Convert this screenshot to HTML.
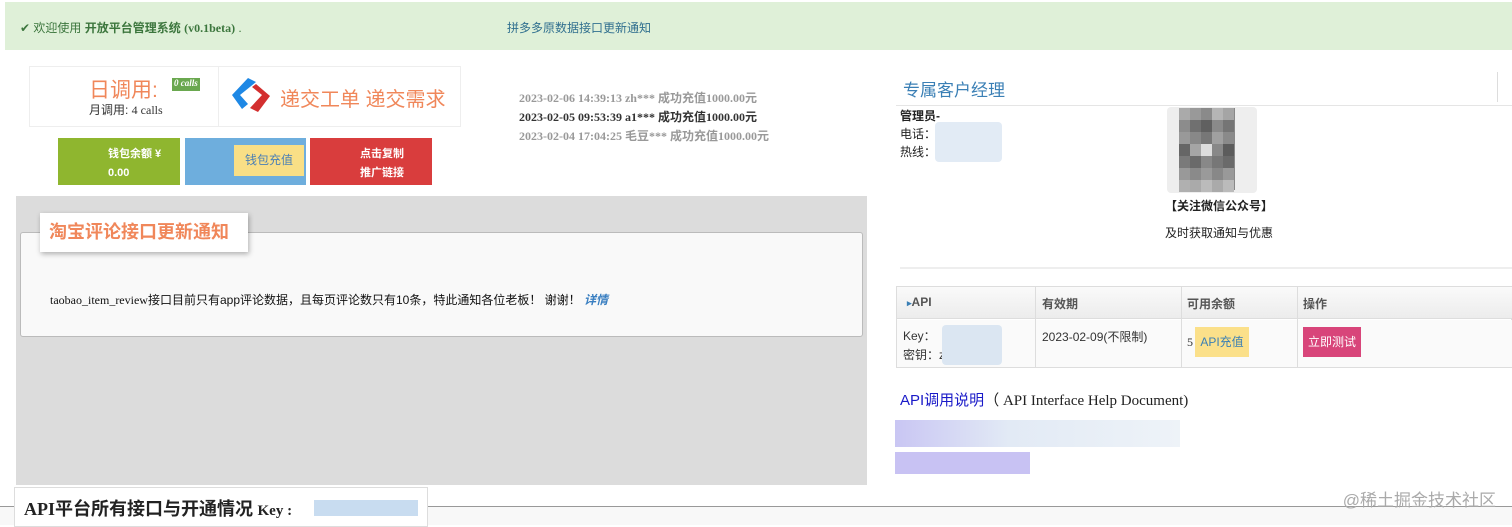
<!DOCTYPE html>
<html><head><meta charset="utf-8"><style>
*{margin:0;padding:0;box-sizing:border-box}
body{width:1512px;height:525px;overflow:hidden;background:#fff;font-family:"Liberation Serif","Noto Sans CJK SC",serif;font-size:12px;color:#333;position:relative}
.a{position:absolute}
.cjk{font-family:"Liberation Sans","Noto Sans CJK SC",sans-serif}
.q{position:absolute;width:11px;height:12px}
</style></head><body>
<div class="a" style="left:5px;top:2px;width:1507px;height:48px;background:#dff0d8"></div>
<div class="a cjk" style="left:20px;top:19px;font-size:12px;color:#3c763d">✔ 欢迎使用 <b>开放平台管理系统</b> <span style="font-family:'Liberation Serif';font-weight:bold">(v0.1beta)</span> .</div>
<div class="a cjk" style="left:507px;top:19px;color:#31708f">拼多多原数据接口更新通知</div>

<div class="a" style="left:29px;top:66px;width:432px;height:61px;border:1px solid #eee"></div>
<div class="a" style="left:218px;top:66px;width:1px;height:61px;background:#eee"></div>
<div class="a cjk" style="left:89px;top:74px;font-size:21px;color:#f0875a">日调用:</div>
<div class="a" style="left:172px;top:78px;width:28px;height:13px;background:#6aa84f;color:#fff;font-size:9px;font-style:italic;font-weight:bold;overflow:hidden;padding-left:2px">0 calls</div>
<div class="a cjk" style="left:89px;top:101px;font-size:12px;color:#333">月调用: <span style="font-family:'Liberation Serif'">4 calls</span></div>
<svg class="a" style="left:230px;top:78px" width="42" height="34" viewBox="0 0 42 34"><path d="M18 0 L26 4 L10 17 L18 26 L12 31 L2 17Z" fill="#1e88e5"/><path d="M26 6 L40 18 L28 34 L20 30 L32 17 L22 9Z" fill="#d32f2f"/></svg>
<div class="a cjk" style="left:280px;top:83px;font-size:20px;color:#f0875a">递交工单 递交需求</div>

<div class="a" style="left:58px;top:138px;width:122px;height:47px;background:#8fb62f"></div>
<div class="a cjk" style="left:108px;top:145px;color:#fff;font-weight:bold;font-size:11px;line-height:19px">钱包余额 ¥<br>0.00</div>
<div class="a" style="left:185px;top:138px;width:121px;height:47px;background:#6eaedd"></div>
<div class="a cjk" style="left:234px;top:145px;width:70px;height:31px;background:#f9df86;color:#4a7fb5;font-size:12px;text-align:center;line-height:31px">钱包充值</div>
<div class="a" style="left:310px;top:138px;width:122px;height:47px;background:#d93d3d"></div>
<div class="a cjk" style="left:360px;top:145px;color:#fff;font-weight:bold;font-size:11px;line-height:19px">点击复制<br>推广链接</div>

<div class="a" style="left:519px;top:89px;color:#999;font-size:12px;line-height:19px;font-weight:bold">2023-02-06 14:39:13 zh*** 成功充值1000.00元<br><span style="color:#333">2023-02-05 09:53:39 a1*** 成功充值1000.00元</span><br>2023-02-04 17:04:25 毛豆*** 成功充值1000.00元</div>

<div class="a" style="left:16px;top:196px;width:851px;height:289px;background:#dcdcdc"></div>
<div class="a" style="left:20px;top:232px;width:843px;height:105px;background:#f9f9f9;border:1px solid #bbb;border-radius:3px"></div>
<div class="a cjk" style="left:40px;top:213px;width:208px;height:39px;background:#fff;box-shadow:1px 2px 5px rgba(0,0,0,.3);color:#f0875a;font-size:18px;font-weight:bold;padding:5px 0 0 9px">淘宝评论接口更新通知</div>
<div class="a" style="left:50px;top:291px;font-size:12px;color:#111">taobao_item_review<span class="cjk">接口目前只有app评论数据，且每页评论数只有10条，特此通知各位老板！ 谢谢！ </span><i class="cjk" style="color:#3a7fc1;font-weight:bold">详情</i></div>

<div class="a" style="left:0;top:506px;width:1512px;height:1px;background:#999"></div>
<div class="a" style="left:0;top:507px;width:1512px;height:18px;background:#f8f8f8"></div>
<div class="a" style="left:14px;top:487px;width:414px;height:40px;background:#fff;border:1px solid #ddd"></div>
<div class="a" style="left:24px;top:495px;font-size:18px;font-weight:bold;color:#222">API<span class="cjk">平台所有接口与开通情况</span> <span style="font-size:15px">Key :</span></div>
<div class="a" style="left:314px;top:500px;width:104px;height:16px;background:#c8dcf0"></div>

<div class="a cjk" style="left:903px;top:76px;font-size:17px;color:#3a7fb5">专属客户经理</div>
<div class="a" style="left:1497px;top:72px;width:1px;height:30px;background:#ddd"></div>
<div class="a" style="left:896px;top:105px;width:616px;height:1px;background:#e5e5e5"></div>
<div class="a cjk" style="left:900px;top:107px;font-size:12px;line-height:18px;color:#222"><b>管理员-</b><br>电话：<br>热线：</div>
<div class="a" style="left:935px;top:122px;width:67px;height:40px;background:#e2ebf5;border-radius:4px"></div>
<div class="a" style="left:1167px;top:107px;width:90px;height:86px;background:#eee;border-radius:4px"></div>
<div class="a" style="left:1179px;top:108px;width:56px;height:82px;background:#888">
<div class="q" style="left:0;top:0;background:#aaa"></div><div class="q" style="left:11px;top:0;background:#999"></div><div class="q" style="left:22px;top:0;background:#8a8a8a"></div><div class="q" style="left:33px;top:0;background:#b5b5b5"></div><div class="q" style="left:44px;top:0;background:#a5a5a5"></div>
<div class="q" style="left:0;top:12px;background:#8c8c8c"></div><div class="q" style="left:11px;top:12px;background:#707070"></div><div class="q" style="left:22px;top:12px;background:#606060"></div><div class="q" style="left:33px;top:12px;background:#8a8a8a"></div><div class="q" style="left:44px;top:12px;background:#757575"></div>
<div class="q" style="left:0;top:24px;background:#999"></div><div class="q" style="left:11px;top:24px;background:#888"></div><div class="q" style="left:22px;top:24px;background:#777"></div><div class="q" style="left:33px;top:24px;background:#a0a0a0"></div><div class="q" style="left:44px;top:24px;background:#8a8a8a"></div>
<div class="q" style="left:0;top:36px;background:#666"></div><div class="q" style="left:11px;top:36px;background:#a5a5a5"></div><div class="q" style="left:22px;top:36px;background:#ddd"></div><div class="q" style="left:33px;top:36px;background:#888"></div><div class="q" style="left:44px;top:36px;background:#5c5c5c"></div>
<div class="q" style="left:0;top:48px;background:#7a7a7a"></div><div class="q" style="left:11px;top:48px;background:#6a6a6a"></div><div class="q" style="left:22px;top:48px;background:#888"></div><div class="q" style="left:33px;top:48px;background:#777"></div><div class="q" style="left:44px;top:48px;background:#6a6a6a"></div>
<div class="q" style="left:0;top:60px;background:#999"></div><div class="q" style="left:11px;top:60px;background:#8a8a8a"></div><div class="q" style="left:22px;top:60px;background:#9a9a9a"></div><div class="q" style="left:33px;top:60px;background:#888"></div><div class="q" style="left:44px;top:60px;background:#999"></div>
<div class="q" style="left:0;top:72px;background:#b0b0b0"></div><div class="q" style="left:11px;top:72px;background:#aaa"></div><div class="q" style="left:22px;top:72px;background:#bbb"></div><div class="q" style="left:33px;top:72px;background:#aaa"></div><div class="q" style="left:44px;top:72px;background:#bbb"></div>
</div>
<div class="a cjk" style="left:1165px;top:197px;font-size:12px;font-weight:bold;color:#222">【关注微信公众号】</div>
<div class="a cjk" style="left:1165px;top:224px;font-size:12px;color:#222">及时获取通知与优惠</div>
<div class="a" style="left:900px;top:267px;width:612px;height:2px;background:#eee"></div>

<div class="a" style="left:896px;top:286px;width:616px;height:82px;border:1px solid #ddd"></div>
<div class="a" style="left:897px;top:287px;width:615px;height:32px;background:linear-gradient(#fafafa,#ececec);border-bottom:1px solid #ddd"></div>
<div class="a" style="left:897px;top:320px;width:615px;height:47px;background:#fafafa"></div>
<div class="a" style="left:1035px;top:287px;width:1px;height:81px;background:#ddd"></div>
<div class="a" style="left:1181px;top:287px;width:1px;height:81px;background:#ddd"></div>
<div class="a" style="left:1297px;top:287px;width:1px;height:81px;background:#ddd"></div>
<div class="a cjk" style="left:907px;top:295px;font-weight:bold;color:#555"><span style="color:#3a7fb5;font-size:9px">▸</span>API</div>
<div class="a cjk" style="left:1042px;top:295px;font-weight:bold;color:#555">有效期</div>
<div class="a cjk" style="left:1187px;top:295px;font-weight:bold;color:#555">可用余额</div>
<div class="a cjk" style="left:1303px;top:295px;font-weight:bold;color:#555">操作</div>
<div class="a cjk" style="left:903px;top:327px;line-height:19px;color:#333">Key：<br>密钥：z</div>
<div class="a" style="left:942px;top:325px;width:60px;height:40px;background:#dbe6f2;border-radius:4px"></div>
<div class="a cjk" style="left:1042px;top:328px;color:#333">2023-02-09(不限制)</div>
<div class="a" style="left:1187px;top:335px;color:#333">5</div>
<div class="a cjk" style="left:1195px;top:327px;width:54px;height:30px;background:#fbe08a;color:#3a7fb5;text-align:center;line-height:30px">API充值</div>
<div class="a cjk" style="left:1303px;top:327px;width:58px;height:30px;background:#d8457a;color:#fff;text-align:center;line-height:30px">立即测试</div>

<div class="a" style="left:900px;top:389px;font-size:15px;color:#222"><span class="cjk" style="color:#1a1ac8">API调用说明</span>（ API Interface Help Document)</div>
<div class="a" style="left:895px;top:420px;width:285px;height:27px;background:linear-gradient(90deg,#c9c6f3,#e2eaf5 40%,#eef3f8)"></div>
<div class="a" style="left:895px;top:452px;width:135px;height:22px;background:#c8c2f3"></div>
<div class="a cjk" style="right:16px;top:486px;font-size:17px;color:#aaa">@稀土掘金技术社区</div>
</body></html>
